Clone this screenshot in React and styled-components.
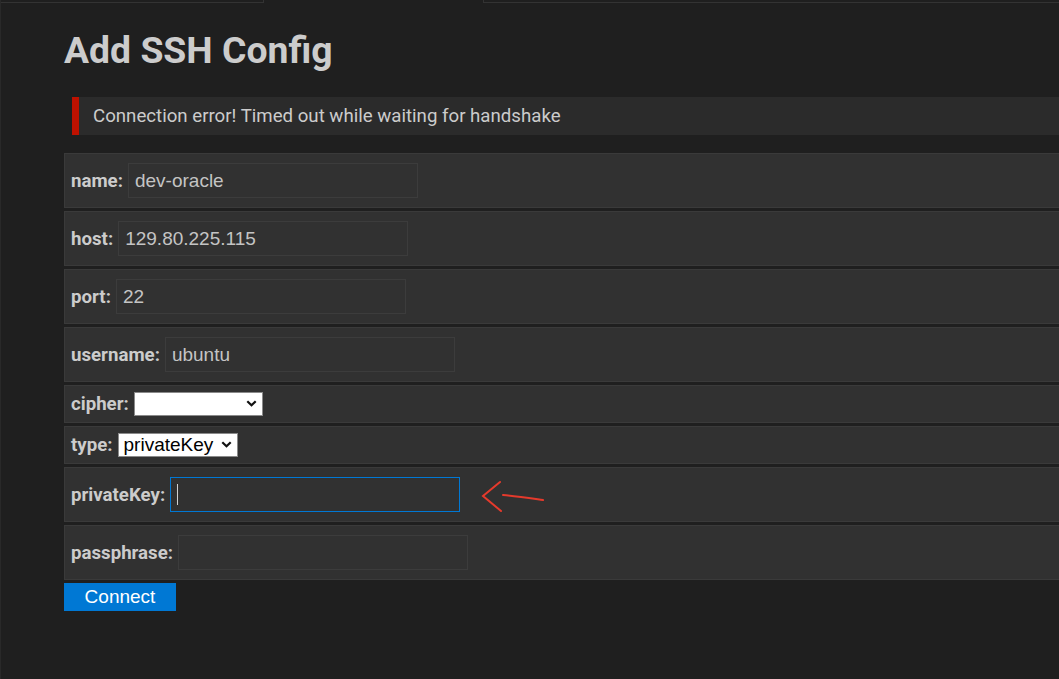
import React from "react";
import styled, { createGlobalStyle } from "styled-components";

const GlobalStyle = createGlobalStyle`
  html, body {
    margin: 0;
    padding: 0;
    background: #1f1f1f;
    overflow: hidden;
  }
  body {
    font-family: Roboto, "Noto Sans", sans-serif;
    color: #cccccc;
  }
`;

function ChevronIcon() {
  return (
    <svg width="11" height="7" viewBox="0 0 11 7">
      <path d="M1.3 1.3 L5.5 5.3 L9.7 1.3" fill="none" stroke="#111" strokeWidth="2.2" />
    </svg>
  );
}

function ArrowMark() {
  return (
    <svg width="66" height="34" viewBox="0 0 66 34">
      <g fill="none" stroke="#e53a2c" strokeWidth="2" strokeLinecap="round">
        <path d="M19 2 L2 16 L20 31" />
        <path d="M22 15 C35 16 48 18 62 20" />
      </g>
    </svg>
  );
}

function Field({ label, value, focused, arrow }) {
  return (
    <Row>
      <Label>{label}:</Label>
      <InputWrap>
        <TextInput defaultValue={value} focused={focused ? 1 : 0} />
        {focused && <Caret />}
      </InputWrap>
      {arrow && <ArrowSlot><ArrowMark /></ArrowSlot>}
    </Row>
  );
}

function SelectField({ label, value, width }) {
  return (
    <Row>
      <Label>{label}:</Label>
      <SelectWrap>
        <Select defaultValue={value} width={width}>
          <option value="">{""}</option>
          {value && <option value={value}>{value}</option>}
        </Select>
        <SelectArrow><ChevronIcon /></SelectArrow>
      </SelectWrap>
    </Row>
  );
}

export default function App() {
  return (
    <>
      <GlobalStyle />
      <Shell>
        <TabStrip>
          <Tab width="263px" />
          <ActiveTab />
          <Tab last />
        </TabStrip>
        <Content>
          <Title>Add SSH Config</Title>
          <ErrorBox>Connection error! Timed out while waiting for handshake</ErrorBox>
          <Form>
            <Field label="name" value="dev-oracle" />
            <Field label="host" value="129.80.225.115" />
            <Field label="port" value="22" />
            <Field label="username" value="ubuntu" />
            <SelectField label="cipher" value="" width="129px" />
            <SelectField label="type" value="privateKey" width="120px" />
            <Field label="privateKey" value="" focused arrow />
            <Field label="passphrase" value="" />
            <ConnectButton type="button">Connect</ConnectButton>
          </Form>
        </Content>
      </Shell>
    </>
  );
}

const Shell = styled.div`
  height: 679px;
  border-left: 1px solid #292929;
  box-sizing: border-box;
`;

const TabStrip = styled.div`
  display: flex;
  height: 3px;
`;

const Tab = styled.div`
  width: ${(p) => p.width || "auto"};
  flex: ${(p) => (p.last ? 1 : "none")};
  border-bottom: 1px solid #333333;
  border-right: ${(p) => (p.last ? "none" : "1px solid #333333")};
  border-left: ${(p) => (p.last ? "1px solid #333333" : "none")};
  box-sizing: border-box;
`;

const ActiveTab = styled.div`
  width: 219px;
`;

const Content = styled.div`
  padding-left: 63px;
`;

const Title = styled.h1`
  margin: 25px 0 25px;
  font-size: 37.33px;
  font-weight: 700;
  color: #cccccc;
  line-height: normal;
`;

const ErrorBox = styled.div`
  margin: 0 0 18px 8px;
  padding: 8px 14px;
  border-left: 7px solid #be1100;
  background: #2b2b2b;
  font-size: 18.67px;
  line-height: 22px;
  color: #cccccc;
`;

const Form = styled.form`
  width: 1100px;
  display: flex;
  flex-direction: column;
  align-items: flex-start;
`;

const Row = styled.div`
  align-self: stretch;
  display: flex;
  align-items: center;
  padding: 6px;
  margin-bottom: 3px;
  background: #313131;
  border: 1px solid #3a3a3a;
`;

const Label = styled.label`
  font-size: 18.67px;
  font-weight: 700;
  line-height: 22px;
  color: #cccccc;
  margin-right: 5px;
`;

const InputWrap = styled.div`
  position: relative;
  display: flex;
`;

const TextInput = styled.input`
  width: 290px;
  height: 35px;
  margin: 3px 0;
  padding: 0 6px;
  box-sizing: border-box;
  background: #313131;
  border: 1px solid ${(p) => (p.focused ? "#0078d4" : "#3c3c3c")};
  outline: none;
  color: #c4c4c4;
  font-family: "Liberation Sans", Arial, sans-serif;
  font-size: 19px;
`;

const Caret = styled.span`
  position: absolute;
  left: 7px;
  top: 10px;
  width: 1px;
  height: 21px;
  background: #d0d0d0;
`;

const ArrowSlot = styled.div`
  display: flex;
  margin-left: 21px;
  margin-top: 4px;
`;

const SelectWrap = styled.div`
  position: relative;
  display: flex;
`;

const Select = styled.select`
  appearance: none;
  width: ${(p) => p.width};
  height: 24px;
  padding: 0 22px 0 5px;
  box-sizing: border-box;
  background: #ffffff;
  border: 1px solid #8a8a8a;
  border-radius: 0;
  color: #000000;
  font-family: "Liberation Sans", Arial, sans-serif;
  font-size: 19px;
  line-height: 22px;
`;

const SelectArrow = styled.span`
  position: absolute;
  right: 6px;
  top: 8px;
  display: flex;
  pointer-events: none;
`;

const ConnectButton = styled.button`
  width: 112px;
  height: 28px;
  padding: 0;
  border: none;
  border-radius: 0;
  background: #0078d4;
  color: #ffffff;
  font-family: "Liberation Sans", Arial, sans-serif;
  font-size: 19px;
  line-height: 28px;
  cursor: pointer;
`;
